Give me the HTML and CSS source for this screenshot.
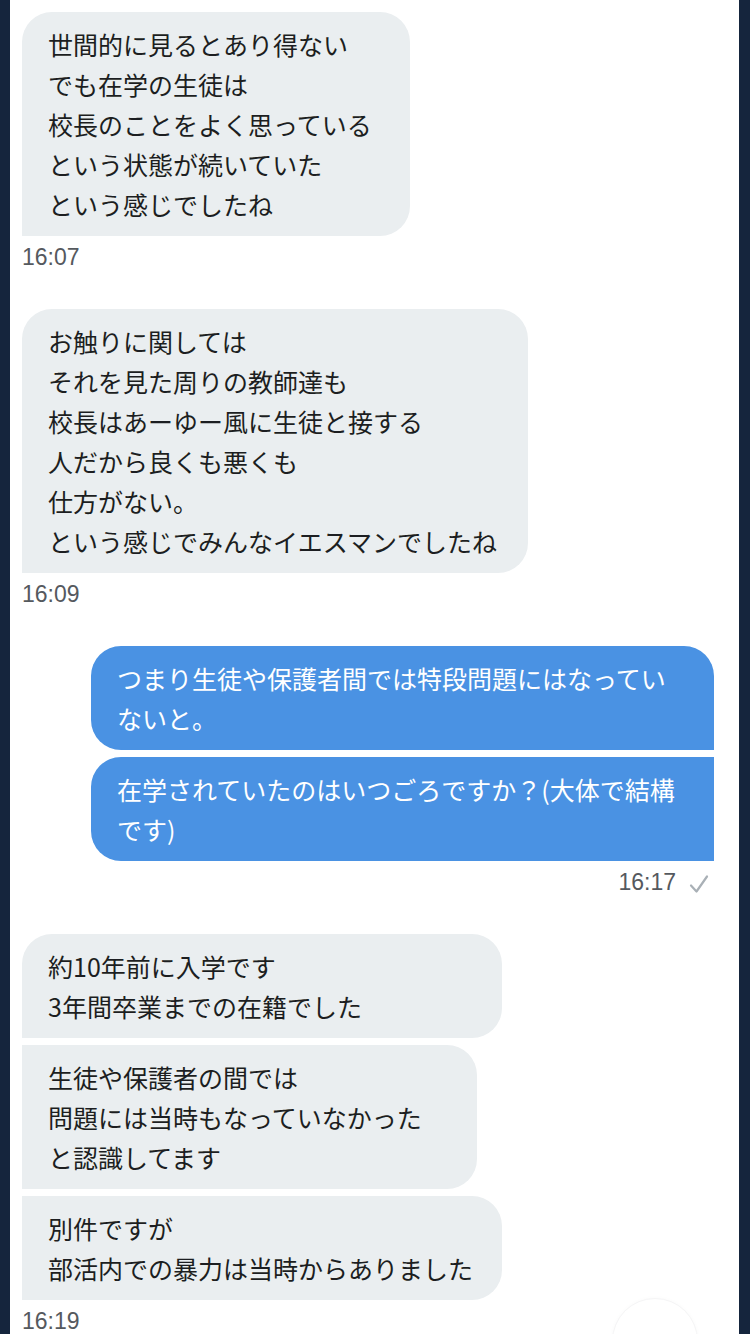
FILE: index.html
```html
<!DOCTYPE html>
<html lang="ja">
<head>
  <meta charset="UTF-8" />
  <title>メッセージ</title>
  <link rel="stylesheet" href="styles.css">
</head>
<body>
  <div class="screen">
    <main class="chat" role="log">

      <div class="group in">
        <div class="bubble first last w-b1">世間的に見るとあり得ない<br>でも在学の生徒は<br>校長のことをよく思っている<br>という状態が続いていた<br>という感じでしたね</div>
        <div class="meta">16:07</div>
      </div>

      <div class="group in">
        <div class="bubble first last w-b2">お触りに関しては<br>それを見た周りの教師達も<br>校長はあーゆー風に生徒と接する<br>人だから良くも悪くも<br>仕方がない。<br>という感じでみんなイエスマンでしたね</div>
        <div class="meta">16:09</div>
      </div>

      <div class="group out">
        <div class="bubble first w-blue">つまり生徒や保護者間では特段問題にはなっていないと。</div>
        <div class="bubble last w-blue">在学されていたのはいつごろですか？(大体で結構です)</div>
        <div class="meta">
          <span>16:17</span>
          <svg class="check" width="22" height="22" viewBox="0 0 22 22" aria-hidden="true">
            <path d="M3 12.5 L8.5 18.5 L19 3.5" fill="none" stroke="#a9b0b6" stroke-width="2.2" stroke-linecap="round" stroke-linejoin="round"/>
          </svg>
        </div>
      </div>

      <div class="group in">
        <div class="bubble first w-g1">約10年前に入学です<br>3年間卒業までの在籍でした</div>
        <div class="bubble w-g2">生徒や保護者の間では<br>問題には当時もなっていなかった<br>と認識してます</div>
        <div class="bubble last w-g3">別件ですが<br>部活内での暴力は当時からありました</div>
        <div class="meta">16:19</div>
      </div>

    </main>
    <div class="scroll-btn" aria-hidden="true"></div>
  </div>
</body>
</html>
```

FILE: styles.css
```css
html, body {
  margin: 0;
  padding: 0;
}
body {
  background: #15253d;
  font-family: "Noto Sans CJK JP", "Noto Sans", sans-serif;
  color: #1c1e21;
}
.screen {
  position: relative;
  margin: 0 11px 0 10px;
  height: 1334px;
  background: #ffffff;
  overflow: hidden;
}
.chat {
  display: flex;
  flex-direction: column;
  gap: 39px;
  padding: 12px 25px 0 12px;
}
.group {
  display: flex;
  flex-direction: column;
  gap: 7px;
}
.group.in {
  align-items: flex-start;
}
.group.out {
  align-items: flex-end;
}
.bubble {
  box-sizing: border-box;
  padding: 12px 26px;
  font-size: 25px;
  line-height: 40px;
  border-radius: 30px;
}
.in .bubble {
  background: #eaeef0;
  color: #1c1e21;
  border-top-left-radius: 0;
  border-bottom-left-radius: 0;
}
.in .bubble.first {
  border-top-left-radius: 30px;
}
.out .bubble {
  background: #4a92e3;
  color: #ffffff;
  border-top-right-radius: 0;
  border-bottom-right-radius: 0;
}
.out .bubble.first {
  border-top-right-radius: 30px;
}
.w-b1 { width: 388px; }
.w-b2 { width: 506px; }
.w-blue { width: 623px; }
.w-g1 { width: 480px; }
.w-g2 { width: 455px; }
.w-g3 { width: 480px; }

.meta {
  display: flex;
  align-items: center;
  gap: 12px;
  margin-top: 1px;
  font-family: "Liberation Sans", Arial, sans-serif;
  font-size: 23px;
  line-height: 26px;
  color: #55595e;
}
.out .meta {
  padding-right: 4px;
}
.check {
  margin-top: 4px;
}
.scroll-btn {
  position: absolute;
  left: 602px;
  top: 1298px;
  width: 84px;
  height: 84px;
  border-radius: 50%;
  background: #ffffff;
  border: 1px solid #f5f5f6;
  box-shadow: 0 0 4px rgba(0, 0, 0, 0.025);
}
```
